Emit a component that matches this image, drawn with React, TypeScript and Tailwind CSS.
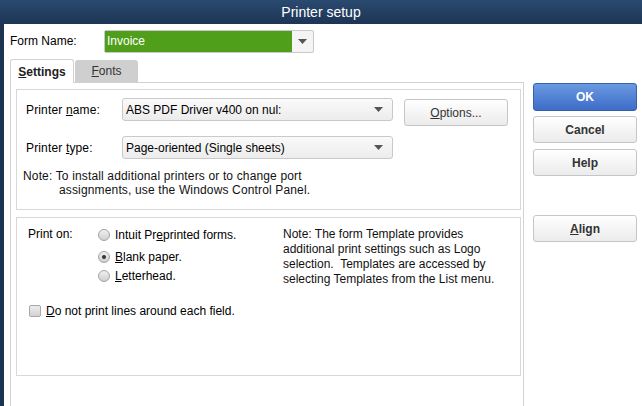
import React from "react";

const font = { fontFamily: '"Liberation Sans", Arial, sans-serif' };

function Arrow() {
    return (
        <svg width="9" height="5" viewBox="0 0 9 5">
            <path d="M0 0 H9 L4.5 5 Z" fill="#555" />
        </svg>
    );
}

function Select({ value, width }: { value: string; width: string }) {
    return (
        <div
            className={`${width} h-[23px] flex items-center justify-between rounded-[3px] border border-[#c9c9c9] bg-gradient-to-b from-[#fafafa] to-[#ececec] pl-[3px] pr-[9px] text-[12px] text-black`}
        >
            <span>{value}</span>
            <Arrow />
        </div>
    );
}

function Btn({ children, primary, bold }: { children: React.ReactNode; primary?: boolean; bold?: boolean }) {
    if (primary) {
        return (
            <div className="w-[104px] h-[28px] flex items-center justify-center rounded-[3px] border border-[#3560ad] bg-gradient-to-b from-[#6a9ae0] to-[#3d6cc8] text-[12px] font-bold text-white">
                {children}
            </div>
        );
    }
    return (
        <div
            className={`w-[104px] h-[27px] flex items-center justify-center rounded-[3px] border border-[#c6c6c6] bg-gradient-to-b from-white to-[#ebebeb] text-[12px] text-[#333] ${bold ? "font-bold" : ""}`}
        >
            {children}
        </div>
    );
}

function Radio({ checked }: { checked?: boolean }) {
    return (
        <div className="w-[12px] h-[12px] rounded-full border border-[#a3a3a3] bg-gradient-to-b from-[#f0f0f0] to-[#cfcfcf] flex items-center justify-center">
            {checked && <div className="w-[4px] h-[4px] rounded-full bg-[#333]" />}
        </div>
    );
}

export default function App() {
    return (
        <div className="w-[642px] h-[406px] overflow-hidden flex flex-col bg-[#1c3352]" style={font}>
            {/* title bar */}
            <div className="h-[24px] shrink-0 flex items-center justify-center bg-gradient-to-b from-[#2a4a70] to-[#1d3555] text-[14px] text-white">
                Printer setup
            </div>

            <div className="flex-1 ml-[4px] bg-white text-[12px] text-black">
                {/* form name */}
                <div className="flex items-center h-[22px] mt-[6px] pl-[6px]">
                    <span className="w-[94px]">Form Name:</span>
                    <div className="w-[210px] h-[23px] flex rounded-[2px] border border-[#c9c9c9] bg-[#f4f4f4]">
                        <div className="w-[187px] bg-[#4f9f1b] text-white pl-[2px] flex items-center">Invoice</div>
                        <div className="flex-1 flex items-center justify-center">
                            <Arrow />
                        </div>
                    </div>
                </div>

                <div className="flex mt-[6px]">
                    {/* left: tabs + page */}
                    <div className="ml-[6px] w-[514px] flex flex-col">
                        <div className="flex items-end h-[24px]">
                            <div className="w-[64px] h-[24px] -mb-px z-10 rounded-t-[3px] border border-b-0 border-[#d2d2d2] bg-white flex items-center justify-center font-bold text-[#222]">
                                <span><u>S</u>ettings</span>
                            </div>
                            <div className="ml-[1px] w-[63px] h-[22px] rounded-t-[3px] bg-[#cfcfcf] flex items-center justify-center text-[#333]">
                                <span><u>F</u>onts</span>
                            </div>
                        </div>
                        <div className="h-[330px] border border-b-0 border-[#d2d2d2] pt-[6px] pl-[5px] pr-[2px] flex flex-col gap-[7px]">
                            {/* group 1 */}
                            <div className="h-[121px] border border-[#d8d8d8] pl-[9px] pt-[8px]">
                                <div className="flex items-start">
                                    <span className="w-[96px] h-[23px] flex items-center tracking-[0.15px]">
                                        <span>Printer <u>n</u>ame:</span>
                                    </span>
                                    <Select value="ABS PDF Driver v400 on nul:" width="w-[271px]" />
                                    <div className="ml-[11px] mt-[1px]">
                                        <Btn>
                                            <span><u>O</u>ptions...</span>
                                        </Btn>
                                    </div>
                                </div>
                                <div className="flex items-center mt-[10px]">
                                    <span className="w-[96px] tracking-[0.15px]">
                                        Printer <u>t</u>ype:
                                    </span>
                                    <Select value="Page-oriented (Single sheets)" width="w-[271px]" />
                                </div>
                                <div className="mt-[10px] -ml-[3px] leading-[14px] text-[#111] tracking-[0.15px]">
                                    <div>Note: To install additional printers or to change port</div>
                                    <div className="pl-[36px]">assignments, use the Windows Control Panel.</div>
                                </div>
                            </div>

                            {/* group 2 */}
                            <div className="h-[159px] border border-[#d8d8d8] pl-[11px] pt-[9px]">
                                <div className="flex">
                                    <span className="w-[70px] leading-[15px]">Print on:</span>
                                    <div className="w-[185px] flex flex-col">
                                        <div className="flex items-center gap-[5px] h-[15px]">
                                            <Radio />
                                            <span>Intuit Pr<u>e</u>printed forms.</span>
                                        </div>
                                        <div className="flex items-center gap-[5px] h-[15px] mt-[7px]">
                                            <Radio checked />
                                            <span><u>B</u>lank paper.</span>
                                        </div>
                                        <div className="flex items-center gap-[5px] h-[15px] mt-[4px]">
                                            <Radio />
                                            <span><u>L</u>etterhead.</span>
                                        </div>
                                    </div>
                                    <div className="leading-[15px] text-[#111]">
                                        <div>Note: The form Template provides</div>
                                        <div>additional print settings such as Logo</div>
                                        <div>selection.&nbsp; Templates are accessed by</div>
                                        <div>selecting Templates from the List menu.</div>
                                    </div>
                                </div>
                                <div className="flex items-center gap-[5px] mt-[15px] ml-[1px]">
                                    <div className="w-[12px] h-[12px] rounded-[2px] border border-[#a8a8a8] bg-gradient-to-b from-[#ececec] to-[#d2d2d2]" />
                                    <span><u>D</u>o not print lines around each field.</span>
                                </div>
                            </div>
                        </div>
                    </div>

                    {/* right buttons */}
                    <div className="ml-[9px] pt-[25px] flex flex-col">
                        <Btn primary>OK</Btn>
                        <div className="mt-[5px]">
                            <Btn bold>Cancel</Btn>
                        </div>
                        <div className="mt-[6px]">
                            <Btn bold>Help</Btn>
                        </div>
                        <div className="mt-[39px]">
                            <Btn bold>
                                <span><u>A</u>lign</span>
                            </Btn>
                        </div>
                    </div>
                </div>
            </div>
        </div>
    );
}
